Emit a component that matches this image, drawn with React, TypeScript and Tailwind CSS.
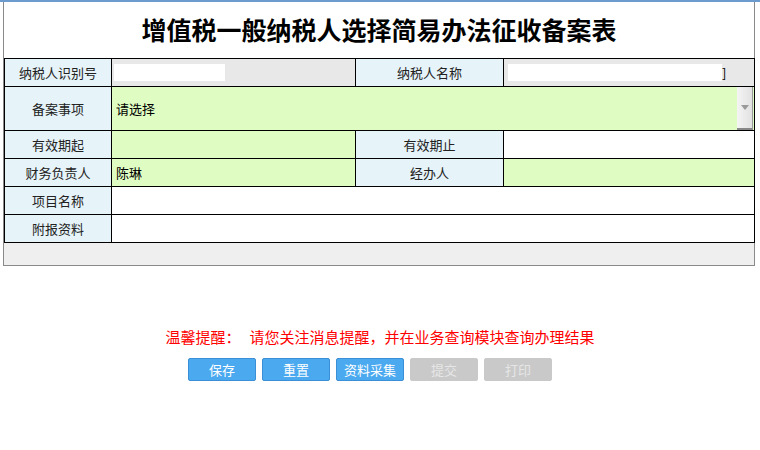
import React from 'react';

const font = { fontFamily: '"SimSun", "Noto Sans CJK SC", sans-serif' };

const Label = ({ children }: { children: React.ReactNode }) => (
  <td className="border border-black bg-[#e6f3f8] text-center text-[13px] text-[#222]">{children}</td>
);

const buttons = [
  { text: '保存', on: true },
  { text: '重置', on: true },
  { text: '资料采集', on: true },
  { text: '提交', on: false },
  { text: '打印', on: false },
];

export default function App() {
  return (
    <div className="w-[760px] h-[450px] bg-white" style={font}>
      <div className="h-[2px] bg-[#6c9bd0]" />
      <div className="ml-[3px] w-[752px] border-x border-b border-[#8a8a8a] bg-[#efefef]">
        <div className="h-[56px] bg-white flex items-center justify-center">
          <h1 className="text-[25px] font-bold text-black">增值税一般纳税人选择简易办法征收备案表</h1>
        </div>
        <table className="w-[750px] border-collapse table-fixed">
          <colgroup>
            <col className="w-[107px]" />
            <col className="w-[244px]" />
            <col className="w-[148px]" />
            <col className="w-[251px]" />
          </colgroup>
          <tbody>
            <tr className="h-[28px]">
              <Label>纳税人识别号</Label>
              <td className="border border-black bg-[#e8e8e8] px-[2px]">
                <div className="w-[111px] h-[17px] bg-white" />
              </td>
              <Label>纳税人名称</Label>
              <td className="border border-black bg-[#e8e8e8] pl-[4px]">
                <div className="flex items-center">
                  <div className="w-[214px] h-[17px] bg-white" />
                  <span className="text-[13px] leading-none text-black">]</span>
                </div>
              </td>
            </tr>
            <tr className="h-[44px]">
              <Label>备案事项</Label>
              <td colSpan={3} className="border border-black bg-[#dffcc2] p-0">
                <div className="flex items-stretch h-[43px]">
                  <span className="flex-1 flex items-center pl-[4px] text-[13px] text-black">请选择</span>
                  <div className="w-[16px] mr-[1px] bg-gradient-to-r from-[#f4f4f4] to-[#e2e2e2] border-b-2 border-r border-b-[#888] border-r-[#999] flex items-center justify-center">
                    <svg width="8" height="5" viewBox="0 0 8 5"><path d="M0 0 L8 0 L4 5 Z" fill="#9a9a9a" /></svg>
                  </div>
                </div>
              </td>
            </tr>
            <tr className="h-[28px]">
              <Label>有效期起</Label>
              <td className="border border-black bg-[#dffcc2]" />
              <Label>有效期止</Label>
              <td className="border border-black bg-white" />
            </tr>
            <tr className="h-[28px]">
              <Label>财务负责人</Label>
              <td className="border border-black bg-[#dffcc2] pl-[4px] text-[13px] text-black">陈琳</td>
              <Label>经办人</Label>
              <td className="border border-black bg-[#dffcc2]" />
            </tr>
            <tr className="h-[28px]">
              <Label>项目名称</Label>
              <td colSpan={3} className="border border-black bg-white" />
            </tr>
            <tr className="h-[28px]">
              <Label>附报资料</Label>
              <td colSpan={3} className="border border-black bg-white" />
            </tr>
          </tbody>
        </table>
        <div className="h-[22px]" />
      </div>
      <div className="mt-[63px] flex justify-center text-[15px] text-[#ff0000] leading-none">
        <span>温馨提醒：</span>
        <span className="ml-[9px]">请您关注消息提醒，并在业务查询模块查询办理结果</span>
      </div>
      <div className="mt-[14px] flex gap-[6px] pl-[188px]">
        {buttons.map(b => (
          <button
            key={b.text}
            className={`w-[68px] h-[23px] rounded-[2px] text-[13px] leading-none ${b.on ? 'bg-[#4aa9ef] border border-[#3a8fd6] text-white' : 'bg-[#c9c9c9] border border-[#c9c9c9] text-[#e6e6e6]'}`}
          >
            {b.text}
          </button>
        ))}
      </div>
    </div>
  );
}
